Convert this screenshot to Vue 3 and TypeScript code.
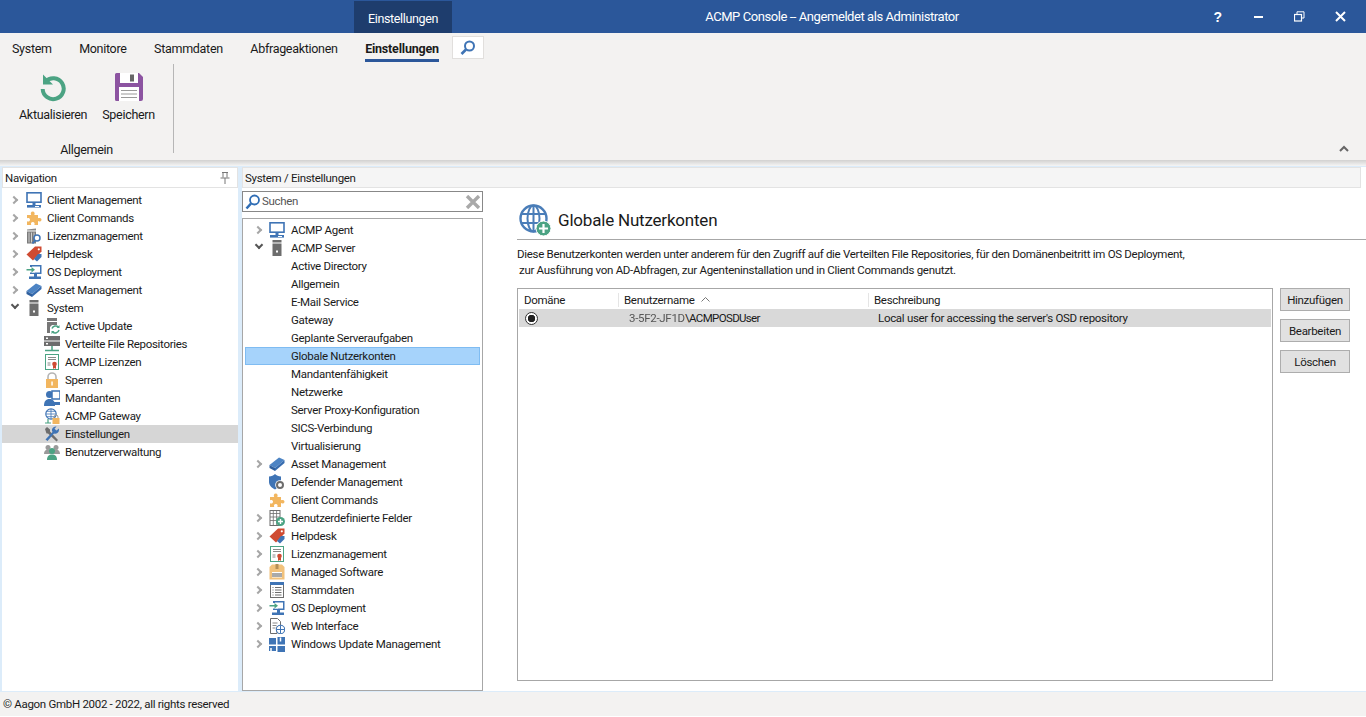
<script setup lang="ts">
interface TreeItem {
  label: string;
  icon?: string;
  arrow?: 'closed' | 'open';
  selected?: boolean;
}

const tabs = ['System', 'Monitore', 'Stammdaten', 'Abfrageaktionen', 'Einstellungen'];

const navItems: TreeItem[] = [
  { label: 'Client Management', icon: 'monitor', arrow: 'closed' },
  { label: 'Client Commands', icon: 'puzzle', arrow: 'closed' },
  { label: 'Lizenzmanagement', icon: 'bin', arrow: 'closed' },
  { label: 'Helpdesk', icon: 'tag', arrow: 'closed' },
  { label: 'OS Deployment', icon: 'deploy', arrow: 'closed' },
  { label: 'Asset Management', icon: 'asset', arrow: 'closed' },
  { label: 'System', icon: 'tower', arrow: 'open' }
];

const navChildren: TreeItem[] = [
  { label: 'Active Update', icon: 'update' },
  { label: 'Verteilte File Repositories', icon: 'repo' },
  { label: 'ACMP Lizenzen', icon: 'cert' },
  { label: 'Sperren', icon: 'lock' },
  { label: 'Mandanten', icon: 'tenant' },
  { label: 'ACMP Gateway', icon: 'gateway' },
  { label: 'Einstellungen', icon: 'tools', selected: true },
  { label: 'Benutzerverwaltung', icon: 'users' }
];

const settingsTop: TreeItem[] = [
  { label: 'ACMP Agent', icon: 'monitor', arrow: 'closed' },
  { label: 'ACMP Server', icon: 'tower', arrow: 'open' }
];

const serverChildren: TreeItem[] = [
  { label: 'Active Directory' },
  { label: 'Allgemein' },
  { label: 'E-Mail Service' },
  { label: 'Gateway' },
  { label: 'Geplante Serveraufgaben' },
  { label: 'Globale Nutzerkonten', selected: true },
  { label: 'Mandantenfähigkeit' },
  { label: 'Netzwerke' },
  { label: 'Server Proxy-Konfiguration' },
  { label: 'SICS-Verbindung' },
  { label: 'Virtualisierung' }
];

const settingsRest: TreeItem[] = [
  { label: 'Asset Management', icon: 'asset', arrow: 'closed' },
  { label: 'Defender Management', icon: 'shield' },
  { label: 'Client Commands', icon: 'puzzle' },
  { label: 'Benutzerdefinierte Felder', icon: 'fields', arrow: 'closed' },
  { label: 'Helpdesk', icon: 'tag', arrow: 'closed' },
  { label: 'Lizenzmanagement', icon: 'cert', arrow: 'closed' },
  { label: 'Managed Software', icon: 'box', arrow: 'closed' },
  { label: 'Stammdaten', icon: 'master', arrow: 'closed' },
  { label: 'OS Deployment', icon: 'deploy', arrow: 'closed' },
  { label: 'Web Interface', icon: 'web', arrow: 'closed' },
  { label: 'Windows Update Management', icon: 'windows', arrow: 'closed' }
];

const actions = ['Hinzufügen', 'Bearbeiten', 'Löschen'];
</script>

<template>
  <div class="window">
    <svg class="sprites" aria-hidden="true">
      <symbol id="monitor" viewBox="0 0 16 16">
        <rect x="1" y=".8" width="14" height="9.400" fill="#fff" stroke="#3f74b5" stroke-width="1.600"/>
        <rect x="6.500" y="11" width="3" height="2" fill="#3f74b5"/>
        <rect x="1" y="13" width="14" height="2.600" fill="#3f74b5"/>
        <rect x="9" y="14" width="4" height="1" fill="#fff"/>
      </symbol>
      <symbol id="puzzle" viewBox="0 0 16 16">
        <path d="M1 5h4.200c-.9-1.600-.3-3.600 1.500-3.600S9.200 3.400 8.300 5H12v3.300c1.500-.8 3.500-.3 3.500 1.400s-2 2.200-3.500 1.400V15H8.300c.8-1.500.2-3-1.500-3s-2.300 1.500-1.500 3H1v-3.800C2.500 12 4 11.400 4 9.800S2.500 7.500 1 8.300z" fill="#f2b65f"/>
      </symbol>
      <symbol id="bin" viewBox="0 0 16 16">
        <path d="M1 1.500 10 .5v2H1z" fill="#8a8a8a"/>
        <rect x="1" y="3.500" width="9" height="12" fill="#7b7b7b"/>
        <path d="M3 4.500v10M5.500 4.500v10M8 4.500v5" stroke="#cfcfcf"/>
        <circle cx="11" cy="10" r="3" fill="#fff" stroke="#3f74b5" stroke-width="1.500"/>
        <path d="m9 12.500-2.500 3" stroke="#3f74b5" stroke-width="1.800"/>
      </symbol>
      <symbol id="tag" viewBox="0 0 16 16">
        <path d="M9 .5h6.500v5L7 14.500.5 8.500z" fill="#cf4b32"/>
        <circle cx="12.800" cy="3.300" r="1.100" fill="#fff"/>
        <path d="M12 8h3.500v3L11 15.500 8 13z" fill="#3f74b5"/>
      </symbol>
      <symbol id="deploy" viewBox="0 0 16 16">
        <rect x="4" y="1" width="11.500" height="9" fill="#3f74b5"/>
        <rect x="6" y="2.500" width="8" height="6" fill="#fff"/>
        <rect x="0" y="3" width="9" height="5.500" fill="#fff"/>
        <path d="M.5 5h5V3l3.500 2.700-3.500 2.800v-2h-5z" fill="#4ba383"/>
        <rect x="8" y="10" width="3" height="3" fill="#3f74b5"/>
        <rect x="3" y="12.500" width="12" height="2.500" fill="#3f74b5"/>
      </symbol>
      <symbol id="asset" viewBox="0 0 16 16">
        <path d="M.5 9 10 1.500l5.500 2.500-9.500 8z" fill="#4d84c4"/>
        <path d="M.5 9l5.500 3v3l-5.500-3z" fill="#2f5f9d"/>
        <path d="M6 12l9.500-8v3L6 15z" fill="#376caf"/>
      </symbol>
      <symbol id="tower" viewBox="0 0 16 16">
        <rect x="3.500" y="0" width="9" height="2.500" fill="#6d6d6d"/>
        <rect x="3.500" y="3.500" width="9" height="12.500" fill="#6d6d6d"/>
        <rect x="7" y="10.500" width="2" height="2" fill="#fff"/>
      </symbol>
      <symbol id="update" viewBox="0 0 16 16">
        <rect x="3" y="0" width="10" height="3" fill="#777"/>
        <path d="M3 4h10v3H8L6 9v6H3z" fill="#777"/>
        <path d="M8 10.500a4 4 0 0 1 6.500-1.500M15 12a4 4 0 0 1-6.500 2" fill="none" stroke="#4ba383" stroke-width="1.500"/>
        <path d="M15.500 7v3h-3zM7.500 16v-3h3z" fill="#4ba383"/>
      </symbol>
      <symbol id="repo" viewBox="0 0 16 16">
        <rect x="0" y="0" width="16" height="4.500" fill="#6d6d6d"/>
        <rect x="0" y="5.500" width="16" height="4.500" fill="#6d6d6d"/>
        <rect x="2" y="1.500" width="2" height="1.500" fill="#fff"/>
        <rect x="2" y="7" width="2" height="1.500" fill="#fff"/>
        <path d="M8 10v4M1 14.500h14" stroke="#4ba383" stroke-width="1.500"/>
      </symbol>
      <symbol id="cert" viewBox="0 0 16 16">
        <rect x="1.500" y=".5" width="13" height="15" fill="#fff" stroke="#4ba383"/>
        <path d="M4 3.500h8M4 5.500h8M3.500 9h3M3.500 11h3" stroke="#8a8a8a"/>
        <circle cx="10.500" cy="10" r="2.300" fill="#cf4b32"/>
        <path d="M9 12h3v3l-1.500-1-1.500 1z" fill="#cf4b32"/>
      </symbol>
      <symbol id="lock" viewBox="0 0 16 16">
        <path d="M4 8V5a4 4 0 0 1 8 0v3" fill="none" stroke="#b5b5b5" stroke-width="1.600"/>
        <rect x="2" y="7" width="12" height="9" fill="#f2b65f"/>
        <rect x="7.300" y="9.500" width="1.500" height="4" fill="#fff"/>
      </symbol>
      <symbol id="tenant" viewBox="0 0 16 16">
        <circle cx="5.500" cy="4.500" r="3.500" fill="#3f74b5"/>
        <path d="M0 16c0-5 2-7 5.500-7s5.500 2 5.500 7z" fill="#3f74b5"/>
        <rect x="8" y="1" width="8" height="8" fill="#fff" stroke="#3f74b5" stroke-width="1.500"/>
        <rect x="9" y="12" width="7" height="3" fill="#3f74b5"/>
      </symbol>
      <symbol id="gateway" viewBox="0 0 16 16">
        <circle cx="7" cy="6" r="5.200" fill="#fff" stroke="#3f74b5" stroke-width="1.200"/>
        <path d="M7 1v10M2 6h10M3 3.300h8M3 8.700h8" stroke="#3f74b5" stroke-width=".8"/>
        <path d="M1 15h6M4 11v4" stroke="#4ba383" stroke-width="1.200"/>
        <path d="M10 10V9a2 2 0 0 1 4 0v1" fill="none" stroke="#999"/>
        <rect x="8.500" y="10" width="7" height="6" fill="#f2b65f"/>
      </symbol>
      <symbol id="tools" viewBox="0 0 16 16">
        <path d="M1 3l2-2 3 2.500 0 2 8 8.500-1.500 1.500L4 7.500H2.500z" fill="#6d6d6d"/>
        <path d="M15 4a3.700 3.700 0 0 1-5 3.500L3.500 15 1.500 13.500 8.500 6A3.700 3.700 0 0 1 12.500.5L10.500 2.800l2 1.700L15 2.500z" fill="#3f74b5"/>
      </symbol>
      <symbol id="users" viewBox="0 0 16 16">
        <circle cx="4" cy="3.500" r="2.500" fill="#9a9a9a"/>
        <circle cx="12" cy="3.500" r="2.500" fill="#9a9a9a"/>
        <path d="M0 10c0-3 1.500-4.500 4-4.500s4 1.500 4 4.500zM8 10c0-3 1.500-4.500 4-4.500s4 1.500 4 4.500z" fill="#9a9a9a"/>
        <circle cx="8" cy="7" r="3" fill="#4ba383"/>
        <path d="M3 16c0-4 2-5.500 5-5.500s5 1.500 5 5.500z" fill="#4ba383"/>
      </symbol>
      <symbol id="shield" viewBox="0 0 16 16">
        <path d="M0 2.500C2.500 2.500 4.500 1.500 6 0c1.500 1.500 3.500 2.500 6 2.500V8c0 3-2.500 6-6 7.500C2.500 14 0 11 0 8z" fill="#3f74b5"/>
        <circle cx="11" cy="11" r="4.800" fill="#fff"/>
        <circle cx="11" cy="11" r="3" fill="none" stroke="#6d6d6d" stroke-width="2"/>
      </symbol>
      <symbol id="fields" viewBox="0 0 16 16">
        <rect x="1" y=".5" width="10" height="15" fill="#fff" stroke="#6d6d6d"/>
        <path d="M1 3.500h10M4.300 .5v15M7.600 .5v15M1 7h10M1 10.500h10" stroke="#6d6d6d" stroke-width=".8"/>
        <circle cx="11.500" cy="11.500" r="4.500" fill="#4ba383"/>
        <path d="M11.500 9v5M9 11.500h5" stroke="#fff" stroke-width="1.400"/>
      </symbol>
      <symbol id="box" viewBox="0 0 16 16">
        <path d="M.5 3 3 .5h10L15.500 3v12.500H.5z" fill="#f2c27c"/>
        <rect x="6.500" y="0" width="3" height="5" fill="#b58f58"/>
        <rect x="3" y="8" width="10" height="5.500" fill="#fff"/>
        <path d="M4 9v4M6 9v4M8 9v4M10 9v4M12 9v4" stroke="#555"/>
      </symbol>
      <symbol id="master" viewBox="0 0 16 16">
        <rect x="1.500" y=".5" width="13" height="15" fill="#fff" stroke="#6d6d6d"/>
        <rect x="1" y="0" width="14" height="3" fill="#3f74b5"/>
        <path d="M3.500 5.500h1M3.500 8h1M3.500 10.500h1M3.500 13h1M6 5.500h6.500M6 8h6.500M6 10.500h6.500M6 13h6.500" stroke="#6d6d6d"/>
      </symbol>
      <symbol id="web" viewBox="0 0 16 16">
        <path d="M1.500.5h7l3 3v5H8v7H1.500z" fill="#fff" stroke="#6d6d6d"/>
        <path d="M3.500 5h5M3.500 7.500h4M3.500 10h3" stroke="#8a8a8a"/>
        <circle cx="11.500" cy="11.500" r="4.200" fill="#fff" stroke="#3f74b5" stroke-width="1.100"/>
        <path d="M11.500 7.500v8M7.500 11.500h8" stroke="#3f74b5"/>
      </symbol>
      <symbol id="windows" viewBox="0 0 16 16">
        <path d="M0 2h7v6.500H0zM8.500 1H16v7.500H8.500zM0 10h7v5H0zM8.500 10H16v6H8.500z" fill="#3f74b5"/>
        <path d="M11.500 1.500v4M2 12v3" stroke="#fff" stroke-width="1.500"/>
      </symbol>
      <symbol id="globe-add" viewBox="0 0 32 32">
        <circle cx="14.500" cy="14.500" r="13" fill="#fff" stroke="#4a7db8" stroke-width="2.400"/>
        <ellipse cx="14.500" cy="14.500" rx="6" ry="13" fill="none" stroke="#4a7db8" stroke-width="2"/>
        <path d="M2 10h25M2 19h25M14.500 1.500v26" stroke="#4a7db8" stroke-width="2"/>
        <circle cx="24.500" cy="24.500" r="7.500" fill="#4ba383" stroke="#fff"/>
        <path d="M24.500 20v9M20 24.500h9" stroke="#fff" stroke-width="2.200"/>
      </symbol>
    </svg>

    <header class="titlebar">
      <div class="context-tab">Einstellungen</div>
      <div class="title">ACMP Console -- Angemeldet als Administrator</div>
      <div class="window-buttons">
        <span class="win-btn help">?</span>
        <span class="win-btn">
          <svg width="10" height="3" viewBox="0 0 10 3"><rect width="9" height="2" y="1" fill="#fff"/></svg>
        </span>
        <span class="win-btn">
          <svg width="11" height="11" viewBox="0 0 11 11" fill="none" stroke="#fff">
            <rect x=".5" y="3.500" width="7" height="6.500" stroke-width="1.200"/>
            <path d="M3 3V.8h7v6.200H8"/>
          </svg>
        </span>
        <span class="win-btn">
          <svg width="11" height="11" viewBox="0 0 11 11" stroke="#fff" stroke-width="2"><path d="M1 1l9 9M10 1l-9 9"/></svg>
        </span>
      </div>
    </header>

    <nav class="tabs">
      <a v-for="tab in tabs" :key="tab" class="tab" :class="{ active: tab === 'Einstellungen' }">{{ tab }}</a>
      <button class="tab-search">
        <svg width="16" height="16" viewBox="0 0 16 16" fill="none" stroke="#3f74b5">
          <circle cx="9.500" cy="6" r="4.500" stroke-width="2"/>
          <path d="M6 9.500 1.500 14" stroke-width="2.600"/>
        </svg>
      </button>
    </nav>

    <section class="ribbon">
      <div class="ribbon-group">
        <div class="ribbon-buttons">
          <button class="ribbon-btn">
            <svg width="30" height="30" viewBox="0 0 30 30" fill="none">
              <path d="M7.500 9.500A10.500 10.500 0 1 1 4.700 17" stroke="#4ba383" stroke-width="4"/>
              <path d="M5 2.500v10h10z" fill="#4ba383"/>
            </svg>
            <span>Aktualisieren</span>
          </button>
          <button class="ribbon-btn">
            <svg width="30" height="30" viewBox="0 0 30 30">
              <path d="M2.500 1h22.500l4 4v22a2 2 0 0 1-2 2H2.500a1.500 1.500 0 0 1-1.500-1.500v-25A1.500 1.500 0 0 1 2.500 1z" fill="#8c54a1"/>
              <rect x="6" y="1" width="18" height="10" fill="#fff"/>
              <rect x="16" y="2.500" width="4" height="7" fill="#666"/>
              <rect x="5" y="15" width="20" height="14" fill="#fff"/>
              <path d="M7 18.500h16M7 22h16M7 25.500h16" stroke="#999"/>
            </svg>
            <span>Speichern</span>
          </button>
        </div>
        <div class="ribbon-caption">Allgemein</div>
      </div>
      <svg class="ribbon-collapse" width="10" height="7" viewBox="0 0 10 7" fill="none" stroke="#666" stroke-width="2"><path d="M1 6l4-4 4 4"/></svg>
    </section>

    <main class="workspace">
      <aside class="nav-panel">
        <div class="nav-head">
          <span>Navigation</span>
          <svg width="12" height="12" viewBox="0 0 12 12" fill="none" stroke="#777">
            <path d="M3 .5h6M4 .5v5M8 .5v5M1.500 6h9M6 6v6"/>
          </svg>
        </div>
        <ul class="tree nav-tree">
          <li v-for="item in navItems" :key="item.label" class="row">
            <span class="arrow" :class="item.arrow"></span>
            <svg class="icon"><use :href="`#${item.icon}`"/></svg>
            <span>{{ item.label }}</span>
          </li>
          <li v-for="item in navChildren" :key="item.label" class="row child" :class="{ current: item.selected }">
            <svg class="icon"><use :href="`#${item.icon}`"/></svg>
            <span>{{ item.label }}</span>
          </li>
        </ul>
      </aside>

      <section class="content">
        <div class="breadcrumb">System / Einstellungen</div>
        <div class="content-body">
          <div class="settings-col">
            <div class="search">
              <svg width="16" height="16" viewBox="0 0 16 16" fill="none" stroke="#2f6db5">
                <circle cx="9.500" cy="6" r="4.500" stroke-width="1.800"/>
                <path d="M6 9.500 1.500 14.500" stroke-width="2.600"/>
              </svg>
              <span class="search-text">Suchen</span>
              <svg class="search-clear" width="16" height="14" viewBox="0 0 16 14" stroke="#a9a9a9" stroke-width="3.400"><path d="M2 1l12 12M14 1 2 13"/></svg>
            </div>
            <ul class="tree settings-tree">
              <li v-for="item in settingsTop" :key="item.label" class="row">
                <span class="arrow" :class="item.arrow"></span>
                <svg class="icon"><use :href="`#${item.icon}`"/></svg>
                <span>{{ item.label }}</span>
              </li>
              <li v-for="item in serverChildren" :key="item.label" class="row plain" :class="{ selected: item.selected }">
                <span>{{ item.label }}</span>
              </li>
              <li v-for="item in settingsRest" :key="item.label" class="row">
                <span class="arrow" :class="item.arrow"></span>
                <svg class="icon"><use :href="`#${item.icon}`"/></svg>
                <span>{{ item.label }}</span>
              </li>
            </ul>
          </div>

          <div class="detail">
            <div class="detail-head">
              <svg width="32" height="32"><use href="#globe-add"/></svg>
              <h1>Globale Nutzerkonten</h1>
            </div>
            <p class="intro">
              Diese Benutzerkonten werden unter anderem für den Zugriff auf die Verteilten File Repositories, für den Domänenbeitritt im OS Deployment,<br>
              <span class="intro-second">zur Ausführung von AD-Abfragen, zur Agenteninstallation und in Client Commands genutzt.</span>
            </p>
            <div class="accounts">
              <div class="grid">
                <div class="grid-head">
                  <div class="cell-domain">Domäne</div>
                  <div class="cell-user">Benutzername
                    <svg width="9" height="5" viewBox="0 0 9 5" fill="none" stroke="#777"><path d="M.5 4.500l4-4 4 4"/></svg>
                  </div>
                  <div class="cell-desc">Beschreibung</div>
                </div>
                <div class="grid-row">
                  <div class="cell-domain radio"><span></span></div>
                  <div class="cell-user"><i class="blurred">3-5F2-JF1D</i><span class="account">\ACMPOSDUser</span></div>
                  <div class="cell-desc">Local user for accessing the server's OSD repository</div>
                </div>
              </div>
              <div class="actions">
                <button v-for="action in actions" :key="action">{{ action }}</button>
              </div>
            </div>
          </div>
        </div>
      </section>
    </main>

    <footer class="status">© Aagon GmbH 2002 - 2022, all rights reserved</footer>
  </div>
</template>

<style scoped>
* {
  box-sizing: border-box;
  margin: 0;
  padding: 0;
}

.window {
  width: 1366px;
  height: 717px;
  display: flex;
  flex-direction: column;
  background: #fff;
  color: #1a1a1a;
  font-family: Roboto, sans-serif;
  font-size: 11.5px;
  letter-spacing: -0.3px;
  overflow: hidden;
}

.sprites {
  display: none;
}

.titlebar {
  height: 33px;
  flex: none;
  display: flex;
  padding-left: 354px;
  background: #2b579a;
  color: #fff;
  font-size: 13px;
  letter-spacing: -0.43px;
}

.context-tab {
  width: 98px;
  margin-top: 1px;
  background: #1e3d6d;
  font-size: 12.5px;
  letter-spacing: -0.35px;
  line-height: 35px;
  text-align: center;
}

.title {
  flex: 1;
  padding-left: 15px;
  text-align: center;
  line-height: 33px;
}

.window-buttons {
  width: 169px;
  flex: none;
  display: flex;
  align-items: center;
}

.win-btn {
  width: 41px;
  height: 33px;
  display: flex;
  align-items: center;
  justify-content: center;
}

.help {
  font-weight: 700;
  font-size: 14px;
  font-family: 'Liberation Sans', sans-serif;
}

.tabs {
  height: 31px;
  flex: none;
  display: flex;
  align-items: flex-start;
  padding-left: 12px;
  gap: 27.5px;
  background: #f3f2f1;
  font-size: 12.5px;
}

.tab {
  height: 29px;
  line-height: 31px;
}

.tab.active {
  font-weight: 700;
  letter-spacing: -0.2px;
  border-bottom: 3px solid #2b579a;
  margin-right: -14px;
}

.tab-search {
  width: 32px;
  height: 23px;
  margin-top: 3px;
  background: #fff;
  border: 1px solid #e1dfdd;
  display: flex;
  align-items: center;
  justify-content: center;
}

.ribbon {
  height: 96px;
  flex: none;
  position: relative;
  display: flex;
  background: #f3f2f1;
  z-index: 1;
}

/* grey fade under the ribbon */
.ribbon::after {
  content: '';
  position: absolute;
  left: 0;
  right: 0;
  top: 100%;
  height: 6px;
  background: linear-gradient(#d2d1d0, #f5f5f5);
}

.ribbon-group {
  width: 174px;
  height: 89px;
  border-right: 1px solid #b6b6b6;
  display: flex;
  flex-direction: column;
}

.ribbon-buttons {
  display: flex;
  padding: 8px 0 0 19px;
  gap: 15px;
}

.ribbon-btn {
  background: none;
  border: none;
  display: flex;
  flex-direction: column;
  align-items: center;
  gap: 5px;
  font: inherit;
  font-size: 12.5px;
  letter-spacing: inherit;
  color: inherit;
}

.ribbon-caption {
  margin-top: 20px;
  text-align: center;
  font-size: 12.5px;
}

.ribbon-collapse {
  position: absolute;
  right: 17px;
  bottom: 8px;
}

.workspace {
  flex: 1;
  min-height: 0;
  display: flex;
  padding: 7px 0 1px 2px;
  gap: 4px;
  background: #dcecfa;
}

.nav-panel {
  width: 236px;
  background: #fff;
  display: flex;
  flex-direction: column;
}

.nav-head {
  height: 21px;
  display: flex;
  align-items: center;
  justify-content: space-between;
  padding: 0 6px 0 2px;
  border: 1px solid #e3e3e3;
}

.tree {
  list-style: none;
}

.nav-tree {
  padding-top: 3px;
}

.row {
  height: 18px;
  display: flex;
  align-items: center;
  white-space: nowrap;
}

.nav-tree .row {
  padding-left: 8px;
}

.nav-tree .row.child {
  padding-left: 42px;
}

.nav-tree .row.current {
  background: #d6d6d6;
}

.arrow {
  width: 16px;
  height: 10px;
  flex: none;
  position: relative;
}

.arrow.closed::before,
.arrow.open::before {
  content: '';
  position: absolute;
  left: 1px;
  top: 2px;
  width: 4px;
  height: 4px;
  border-top: 2px solid #a6a6a6;
  border-right: 2px solid #a6a6a6;
  transform: rotate(45deg);
}

.arrow.open::before {
  border-color: #555;
  transform: rotate(135deg);
  left: 2px;
  top: -1px;
}

.icon {
  width: 16px;
  height: 16px;
  flex: none;
  margin-right: 5px;
}

.content {
  flex: 1;
  min-width: 0;
  display: flex;
  flex-direction: column;
  background: #fff;
}

.breadcrumb {
  height: 21px;
  line-height: 21px;
  padding-left: 2px;
  background: #f5f5f5;
  border: 1px solid #e3e3e3;
  margin-right: 5px;
}

.content-body {
  flex: 1;
  min-height: 0;
  display: flex;
  padding-top: 3px;
}

.settings-col {
  width: 241px;
  flex: none;
  display: flex;
  flex-direction: column;
  gap: 6px;
}

.search {
  height: 21px;
  display: flex;
  align-items: center;
  gap: 1px;
  padding: 0 1px 0 2px;
  border: 1px solid #888;
  background: #fff;
}

.search-text {
  flex: 1;
  margin-bottom: 2px;
  color: #555;
}

.tree.settings-tree {
  flex: 1;
  padding-top: 2px;
  border: 1px solid #a7a7a7;
}

.settings-tree .row {
  padding-left: 11px;
}

.settings-tree .arrow {
  width: 15px;
}

.settings-tree .row .icon {
  margin-right: 6px;
}

.settings-tree .row.plain {
  padding-left: 46px;
  margin: 0 2px;
}

.settings-tree .row.selected {
  padding-left: 45px;
  background: #a6d3fb;
  border: 1px solid #7fbcf2;
}

.detail {
  flex: 1;
  min-width: 0;
  padding: 10px 0 0 34px;
}

.detail-head {
  display: flex;
  align-items: center;
  gap: 7px;
  height: 39px;
  padding-left: 2px;
  border-bottom: 1px solid #a7a7a7;
}

.detail-head h1 {
  font-size: 17px;
  font-weight: 400;
  letter-spacing: -0.2px;
}

.intro {
  margin-top: 6px;
  line-height: 16px;
  white-space: nowrap;
}

.intro-second {
  padding-left: 2px;
}

.accounts {
  display: flex;
  margin-top: 10px;
  gap: 7px;
  height: 393px;
}

.grid {
  width: 756px;
  border: 1px solid #a7a7a7;
  padding: 1px;
}

.grid-head,
.grid-row {
  display: flex;
  height: 18px;
  align-items: center;
  white-space: nowrap;
}

.grid-head {
  height: 19px;
}

.cell-domain {
  width: 99px;
  padding-left: 5px;
}

.cell-user {
  width: 250px;
  padding-left: 5px;
  border-left: 1px solid #e5e5e5;
}

.cell-desc {
  flex: 1;
  padding-left: 5px;
  border-left: 1px solid #e5e5e5;
}

.cell-user svg {
  margin: 0 0 2px 4px;
}

.grid-row {
  background: #d9d9d9;
}

.grid-row .cell-user,
.grid-row .cell-desc {
  border-left: none;
}

.grid-row .cell-desc {
  padding-left: 10px;
}

.blurred {
  display: inline-block;
  width: 56px;
  font-style: normal;
  filter: blur(0.6px);
  color: #555;
  margin-left: 6px;
}

.account {
  letter-spacing: -0.65px;
}

.radio {
  display: flex;
  align-items: center;
}

.radio span {
  width: 13px;
  height: 13px;
  margin-left: 1px;
  border: 1px solid #333;
  border-radius: 50%;
  background: radial-gradient(circle, #222 0 3.5px, #fff 4px);
}

.actions {
  width: 70px;
  display: flex;
  flex-direction: column;
  gap: 8px;
}

.actions button {
  height: 23px;
  background: #e1e1e1;
  border: 1px solid #adadad;
  font: inherit;
  letter-spacing: inherit;
  color: inherit;
}

.status {
  height: 24px;
  flex: none;
  margin-bottom: 1px;
  line-height: 24px;
  padding-left: 3px;
  background: #f3f2f1;
}
</style>
